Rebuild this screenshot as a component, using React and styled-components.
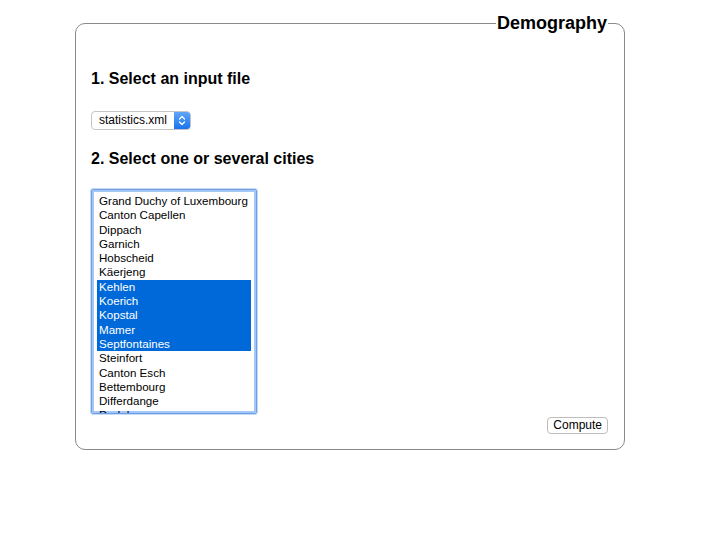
import React, { useState } from 'react';
import styled, { createGlobalStyle } from 'styled-components';

const GlobalStyle = createGlobalStyle`
  html, body { margin: 0; padding: 0; background: #fff; }
  body { font-family: "Liberation Sans", Arial, Helvetica, sans-serif; color: #000; }
`;

const cities = [
  'Grand Duchy of Luxembourg', 'Canton Capellen', 'Dippach', 'Garnich', 'Hobscheid',
  'Käerjeng', 'Kehlen', 'Koerich', 'Kopstal', 'Mamer', 'Septfontaines', 'Steinfort',
  'Canton Esch', 'Bettembourg', 'Differdange', 'Dudelange', 'Esch-sur-Alzette',
  'Frisange', 'Kayl', 'Leudelange'
];

const Page = styled.div`
  padding: 13px 0 0 75px;
`;

const Frame = styled.fieldset`
  width: 550px;
  box-sizing: border-box;
  margin: 0;
  padding: 0 16px 15px 15px;
  border: 1px solid #8a8a8a;
  border-radius: 10px;
`;

const Legend = styled.legend`
  margin-left: auto;
  margin-right: 0;
  padding: 0 1px;
  font-size: 18px;
  line-height: 20px;
  font-weight: bold;
  float: none;
`;

const Heading = styled.h3`
  margin: ${p => p.$top}px 0 0;
  font-size: 16px;
  line-height: 19px;
  font-weight: bold;
`;

const Picker = styled.div`
  margin-top: 23px;
  width: 100px;
  height: 19px;
  box-sizing: border-box;
  display: flex;
  border: 1px solid #c4c4c4;
  border-radius: 4px;
  overflow: hidden;
  background: #fff;
`;

const PickerText = styled.span`
  flex: 1;
  font-size: 12px;
  line-height: 17px;
  padding-left: 7px;
`;

const Stepper = styled.span`
  width: 16px;
  display: flex;
  align-items: center;
  justify-content: center;
  background: linear-gradient(#5fa6f9, #1a73ef);
`;

const ListBox = styled.div`
  margin-top: 21px;
  width: 166px;
  height: 225px;
  box-sizing: border-box;
  border: 1px solid #6f9fe0;
  box-shadow: 0 0 0 1px #c4dbf9, 0 0 0 2px #a3c7f7 inset;
  border-radius: 2px;
  padding: 4px 5px 0;
  overflow: hidden;
`;

const Option = styled.div`
  font-size: 11.6px;
  line-height: 14.3px;
  padding-left: 2px;
  white-space: nowrap;
  background: ${p => (p.$on ? '#0069d9' : 'transparent')};
  color: ${p => (p.$on ? '#fff' : '#000')};
`;

const Actions = styled.div`
  display: flex;
  justify-content: flex-end;
  margin-top: 3px;
`;

const Button = styled.button`
  font-family: inherit;
  font-size: 12px;
  line-height: 15px;
  height: 17px;
  padding: 0 5px;
  background: #fff;
  border: 1px solid #bdbdbd;
  border-radius: 4px;
  color: #000;
`;

const StepperIcon = () => (
  <svg width="8" height="11" viewBox="0 0 8 11">
    <path d="M1.5 4 L4 1.5 L6.5 4 M1.5 7 L4 9.5 L6.5 7" fill="none" stroke="#fff" strokeWidth="1.3" strokeLinecap="round" strokeLinejoin="round" />
  </svg>
);

const App = () => {
  const [selected] = useState(['Kehlen', 'Koerich', 'Kopstal', 'Mamer', 'Septfontaines']);

  return (
    <Page>
      <GlobalStyle />
      <Frame>
        <Legend>Demography</Legend>
        <Heading $top={36}>1. Select an input file</Heading>
        <Picker>
          <PickerText>statistics.xml</PickerText>
          <Stepper><StepperIcon /></Stepper>
        </Picker>
        <Heading $top={19}>2. Select one or several cities</Heading>
        <ListBox>
          {cities.map(c => (
            <Option key={c} $on={selected.includes(c)}>{c}</Option>
          ))}
        </ListBox>
        <Actions>
          <Button>Compute</Button>
        </Actions>
      </Frame>
    </Page>
  );
};

export default App;
